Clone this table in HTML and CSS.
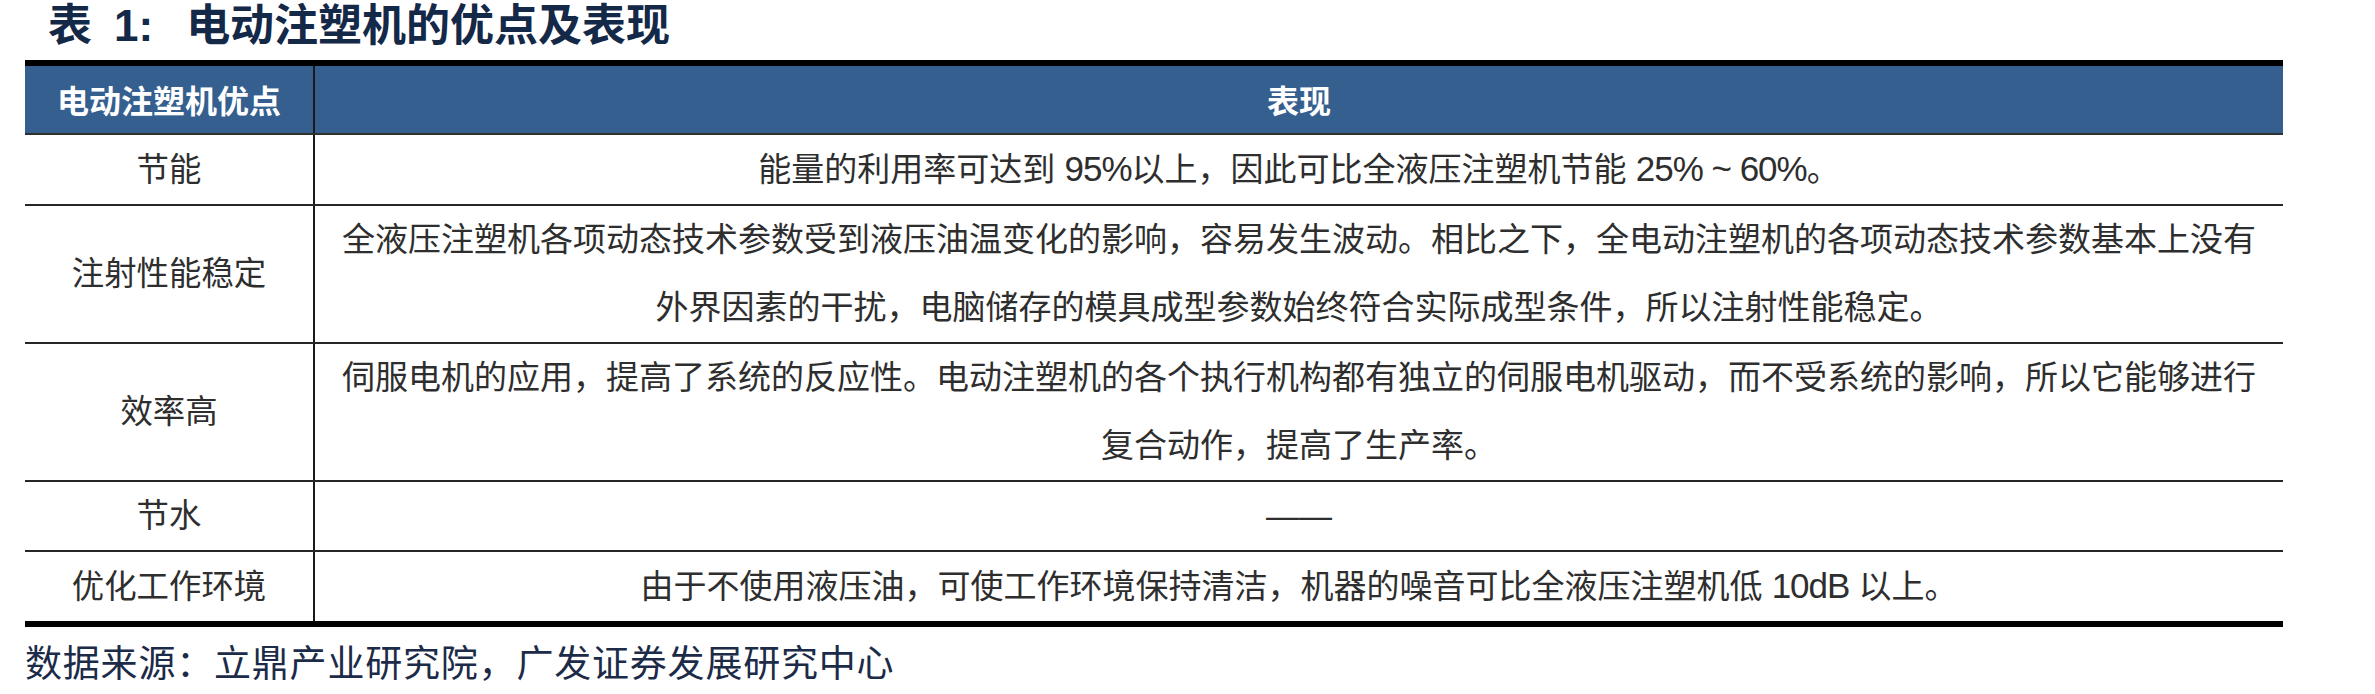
FILE: index.html
```html
<!DOCTYPE html>
<html lang="zh-CN">
<head>
<meta charset="utf-8">
<title>表 1：电动注塑机的优点及表现</title>
<link rel="stylesheet" href="styles.css">
</head>
<body>
<div class="page">
  <h1 class="title"><span class="t-label">表</span><span class="t-num">1:</span><span class="t-text">电动注塑机的优点及表现</span></h1>
  <div class="table">
    <div class="row head">
      <div class="c1">电动注塑机优点</div>
      <div class="c2">表现</div>
    </div>
    <div class="row">
      <div class="c1">节能</div>
      <div class="c2">能量的利用率可达到 <span class="num">95%</span>以上，因此可比全液压注塑机节能 <span class="num">25% ~ 60%</span>。</div>
    </div>
    <div class="row">
      <div class="c1">注射性能稳定</div>
      <div class="c2">全液压注塑机各项动态技术参数受到液压油温变化的影响，容易发生波动。相比之下，全电动注塑机的各项动态技术参数基本上没有<br>外界因素的干扰，电脑储存的模具成型参数始终符合实际成型条件，所以注射性能稳定。</div>
    </div>
    <div class="row">
      <div class="c1">效率高</div>
      <div class="c2">伺服电机的应用，提高了系统的反应性。电动注塑机的各个执行机构都有独立的伺服电机驱动，而不受系统的影响，所以它能够进行<br>复合动作，提高了生产率。</div>
    </div>
    <div class="row">
      <div class="c1">节水</div>
      <div class="c2">——</div>
    </div>
    <div class="row last">
      <div class="c1">优化工作环境</div>
      <div class="c2">由于不使用液压油，可使工作环境保持清洁，机器的噪音可比全液压注塑机低 <span class="num">10dB</span> 以上。</div>
    </div>
  </div>
  <p class="source">数据来源：立鼎产业研究院，广发证券发展研究中心</p>
</div>
</body>
</html>
```
FILE: styles.css
```css
html, body {
  margin: 0;
  padding: 0;
  background: #ffffff;
}

.page {
  padding-left: 25px;
  width: 2258px;
}

.title {
  margin: 0 0 8px 0;
  padding-left: 23px;
  height: 52px;
  display: flex;
  align-items: center;
  font-family: "Liberation Sans", "Noto Sans CJK SC", sans-serif;
  font-weight: 700;
  font-size: 44px;
  line-height: 52px;
  color: #142848;
}

.t-num {
  margin-left: 22px;
}

.t-text {
  margin-left: 33px;
}

.table {
  border-top: 6px solid #000000;
  border-bottom: 6px solid #000000;
  font-family: "Liberation Sans", "Noto Sans CJK SC", sans-serif;
  font-size: 32.4px;
  color: #2e2e2e;
}

.row {
  display: grid;
  grid-template-columns: 290px 1fr;
  border-bottom: 2px solid #262626;
}

.row.last {
  border-bottom: none;
}

.row.head {
  background: #355f8f;
  color: #ffffff;
  font-family: "Noto Sans CJK SC", sans-serif;
  font-weight: 700;
  font-size: 32px;
  border-bottom: 2px solid #303030;
}

.c1 {
  display: flex;
  align-items: center;
  justify-content: center;
  border-right: 2px solid #1a1a1a;
  line-height: 68px;
  text-align: center;
}

.head .c1,
.head .c2 {
  line-height: 67px;
}

.c2 {
  text-align: center;
  line-height: 68px;
  padding: 0 8px;
  font-size: 33px;
}

.head .c2 {
  font-size: 32px;
}

.num {
  font-size: 35px;
  letter-spacing: -1px;
}

.source {
  margin: 12px 0 0 0;
  font-family: "Noto Sans CJK SC", sans-serif;
  font-size: 37px;
  letter-spacing: 0.8px;
  line-height: 44px;
  color: #1c2b48;
}
```
